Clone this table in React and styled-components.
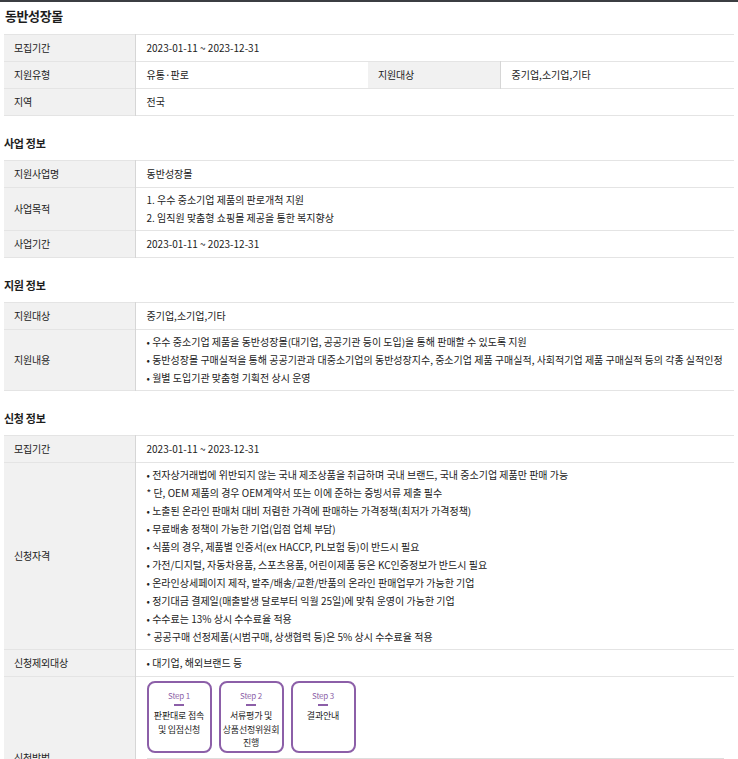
import styled, { createGlobalStyle } from "styled-components";

const GlobalStyle = createGlobalStyle`
  html, body {
    margin: 0;
    padding: 0;
    background: #fff;
  }
  body {
    font-family: "Noto Sans CJK KR", "Noto Sans", sans-serif;
    color: #222;
  }
  * {
    box-sizing: border-box;
  }
`;

const Page = styled.div`
  border-top: 2px solid #3b3e42;
  padding: 0 4px 40px;
`;

const Title = styled.h2`
  margin: 0;
  padding: 4px 1px 0;
  height: 32px;
  font-size: 13px;
  line-height: 20px;
  font-weight: 700;
  letter-spacing: -0.4px;
  color: #1d1d1d;
`;

const SectionTitle = styled.h3`
  margin: 0;
  padding: 18px 0 0;
  height: 44px;
  font-size: 11px;
  line-height: 18px;
  font-weight: 700;
  letter-spacing: -0.3px;
  color: #1d1d1d;
`;

const Table = styled.table`
  width: 100%;
  border-collapse: collapse;
  table-layout: fixed;
  border-top: 1px solid #e4e4e4;
`;

const Row = styled.tr`
  border-bottom: 1px solid #e4e4e4;
`;

const Th = styled.th`
  background: #f1f1f1;
  border-right: 1px solid #d6d6d6;
  padding: 4px 10px;
  text-align: left;
  font-weight: 400;
  font-size: 10px;
  line-height: 18px;
  letter-spacing: -0.2px;
  color: #222;
  vertical-align: middle;
`;

const Td = styled.td`
  padding: ${({ $list }) => ($list ? "3px 10px 3px 11px" : "4px 10px 4px 11px")};
  font-size: 10px;
  line-height: 18px;
  letter-spacing: 0;
  color: #222;
  vertical-align: ${({ $top }) => ($top ? "top" : "middle")};
`;

const List = styled.ul`
  margin: 0;
  padding: 0;
  list-style: none;
`;

const Item = styled.li`
  line-height: 18px;
`;

const Steps = styled.div`
  display: flex;
  gap: 7px;
  padding-bottom: 5px;
  margin-bottom: 4px;
  border-bottom: 1px solid #ddd;
`;

const StepBox = styled.div`
  width: 65px;
  height: 72px;
  border: 2px solid #8c5fa8;
  border-radius: 8px;
  display: flex;
  flex-direction: column;
  align-items: center;
  padding-top: 7px;
`;

const StepLabel = styled.span`
  font-size: 8px;
  line-height: 12px;
  color: #8c5fa8;
  letter-spacing: -0.2px;
`;

const StepDash = styled.span`
  width: 10px;
  height: 2px;
  background: #8c5fa8;
  margin: 2px 0 3px;
`;

const StepText = styled.p`
  margin: 0;
  text-align: center;
  font-size: 9px;
  line-height: 13.5px;
  letter-spacing: -0.2px;
  color: #1d1d1d;
`;

const Cols = () => (
  <colgroup>
    <col style={{ width: 131 }} />
    <col style={{ width: 233 }} />
    <col style={{ width: 132 }} />
    <col />
  </colgroup>
);

const Field = ({ label, children, top, list }) => (
  <Row>
    <Th>{label}</Th>
    <Td colSpan={3} $top={top} $list={list}>
      {children}
    </Td>
  </Row>
);

const qualify = [
  "• 전자상거래법에 위반되지 않는 국내 제조상품을 취급하며 국내 브랜드, 국내 중소기업 제품만 판매 가능",
  "* 단, OEM 제품의 경우 OEM계약서 또는 이에 준하는 증빙서류 제출 필수",
  "• 노출된 온라인 판매처 대비 저렴한 가격에 판매하는 가격정책(최저가 가격정책)",
  "• 무료배송 정책이 가능한 기업(입점 업체 부담)",
  "• 식품의 경우, 제품별 인증서(ex HACCP, PL보험 등)이 반드시 필요",
  "• 가전/디지털, 자동차용품, 스포츠용품, 어린이제품 등은 KC인증정보가 반드시 필요",
  "• 온라인상세페이지 제작, 발주/배송/교환/반품의 온라인 판매업무가 가능한 기업",
  "• 정기대금 결제일(매출발생 달로부터 익월 25일)에 맞춰 운영이 가능한 기업",
  "• 수수료는 13% 상시 수수료율 적용",
  "* 공공구매 선정제품(시범구매, 상생협력 등)은 5% 상시 수수료율 적용",
];

const steps = [
  { step: "Step 1", text: ["판판대로 접속", "및 입점신청"] },
  { step: "Step 2", text: ["서류평가 및", "상품선정위원회", "진행"] },
  { step: "Step 3", text: ["결과안내"] },
];

export default function App() {
  return (
    <>
      <GlobalStyle />
      <Page>
        <Title>동반성장몰</Title>
        <Table>
          <Cols />
          <tbody>
            <Field label="모집기간">2023-01-11 ~ 2023-12-31</Field>
            <Row>
              <Th>지원유형</Th>
              <Td>유통·판로</Td>
              <Th>지원대상</Th>
              <Td>중기업,소기업,기타</Td>
            </Row>
            <Field label="지역">전국</Field>
          </tbody>
        </Table>

        <SectionTitle>사업 정보</SectionTitle>
        <Table>
          <Cols />
          <tbody>
            <Field label="지원사업명">동반성장몰</Field>
            <Field label="사업목적" list>
              <List>
                <Item>1. 우수 중소기업 제품의 판로개척 지원</Item>
                <Item>2. 임직원 맞춤형 쇼핑몰 제공을 통한 복지향상</Item>
              </List>
            </Field>
            <Field label="사업기간">2023-01-11 ~ 2023-12-31</Field>
          </tbody>
        </Table>

        <SectionTitle>지원 정보</SectionTitle>
        <Table>
          <Cols />
          <tbody>
            <Field label="지원대상">중기업,소기업,기타</Field>
            <Field label="지원내용" list>
              <List>
                <Item>• 우수 중소기업 제품을 동반성장몰(대기업, 공공기관 등이 도입)을 통해 판매할 수 있도록 지원</Item>
                <Item>• 동반성장몰 구매실적을 통해 공공기관과 대중소기업의 동반성장지수, 중소기업 제품 구매실적, 사회적기업 제품 구매실적 등의 각종 실적인정</Item>
                <Item>• 월별 도입기관 맞춤형 기획전 상시 운영</Item>
              </List>
            </Field>
          </tbody>
        </Table>

        <SectionTitle>신청 정보</SectionTitle>
        <Table>
          <Cols />
          <tbody>
            <Field label="모집기간">2023-01-11 ~ 2023-12-31</Field>
            <Field label="신청자격" list>
              <List>
                {qualify.map((q) => (
                  <Item key={q}>{q}</Item>
                ))}
              </List>
            </Field>
            <Field label="신청제외대상">• 대기업, 해외브랜드 등</Field>
            <Field label="신청방법" top>
              <Steps>
                {steps.map((s) => (
                  <StepBox key={s.step}>
                    <StepLabel>{s.step}</StepLabel>
                    <StepDash />
                    {s.text.map((t) => (
                      <StepText key={t}>{t}</StepText>
                    ))}
                  </StepBox>
                ))}
              </Steps>
              <List>
                <Item>• 판판대로 홈페이지에서 온라인 신청</Item>
                <Item>• 서류평가 후 상품선정위원회 진행</Item>
                <Item>• 결과는 개별 안내</Item>
                <Item>• 문의: 동반성장몰 운영사무국</Item>
              </List>
            </Field>
          </tbody>
        </Table>
      </Page>
    </>
  );
}
